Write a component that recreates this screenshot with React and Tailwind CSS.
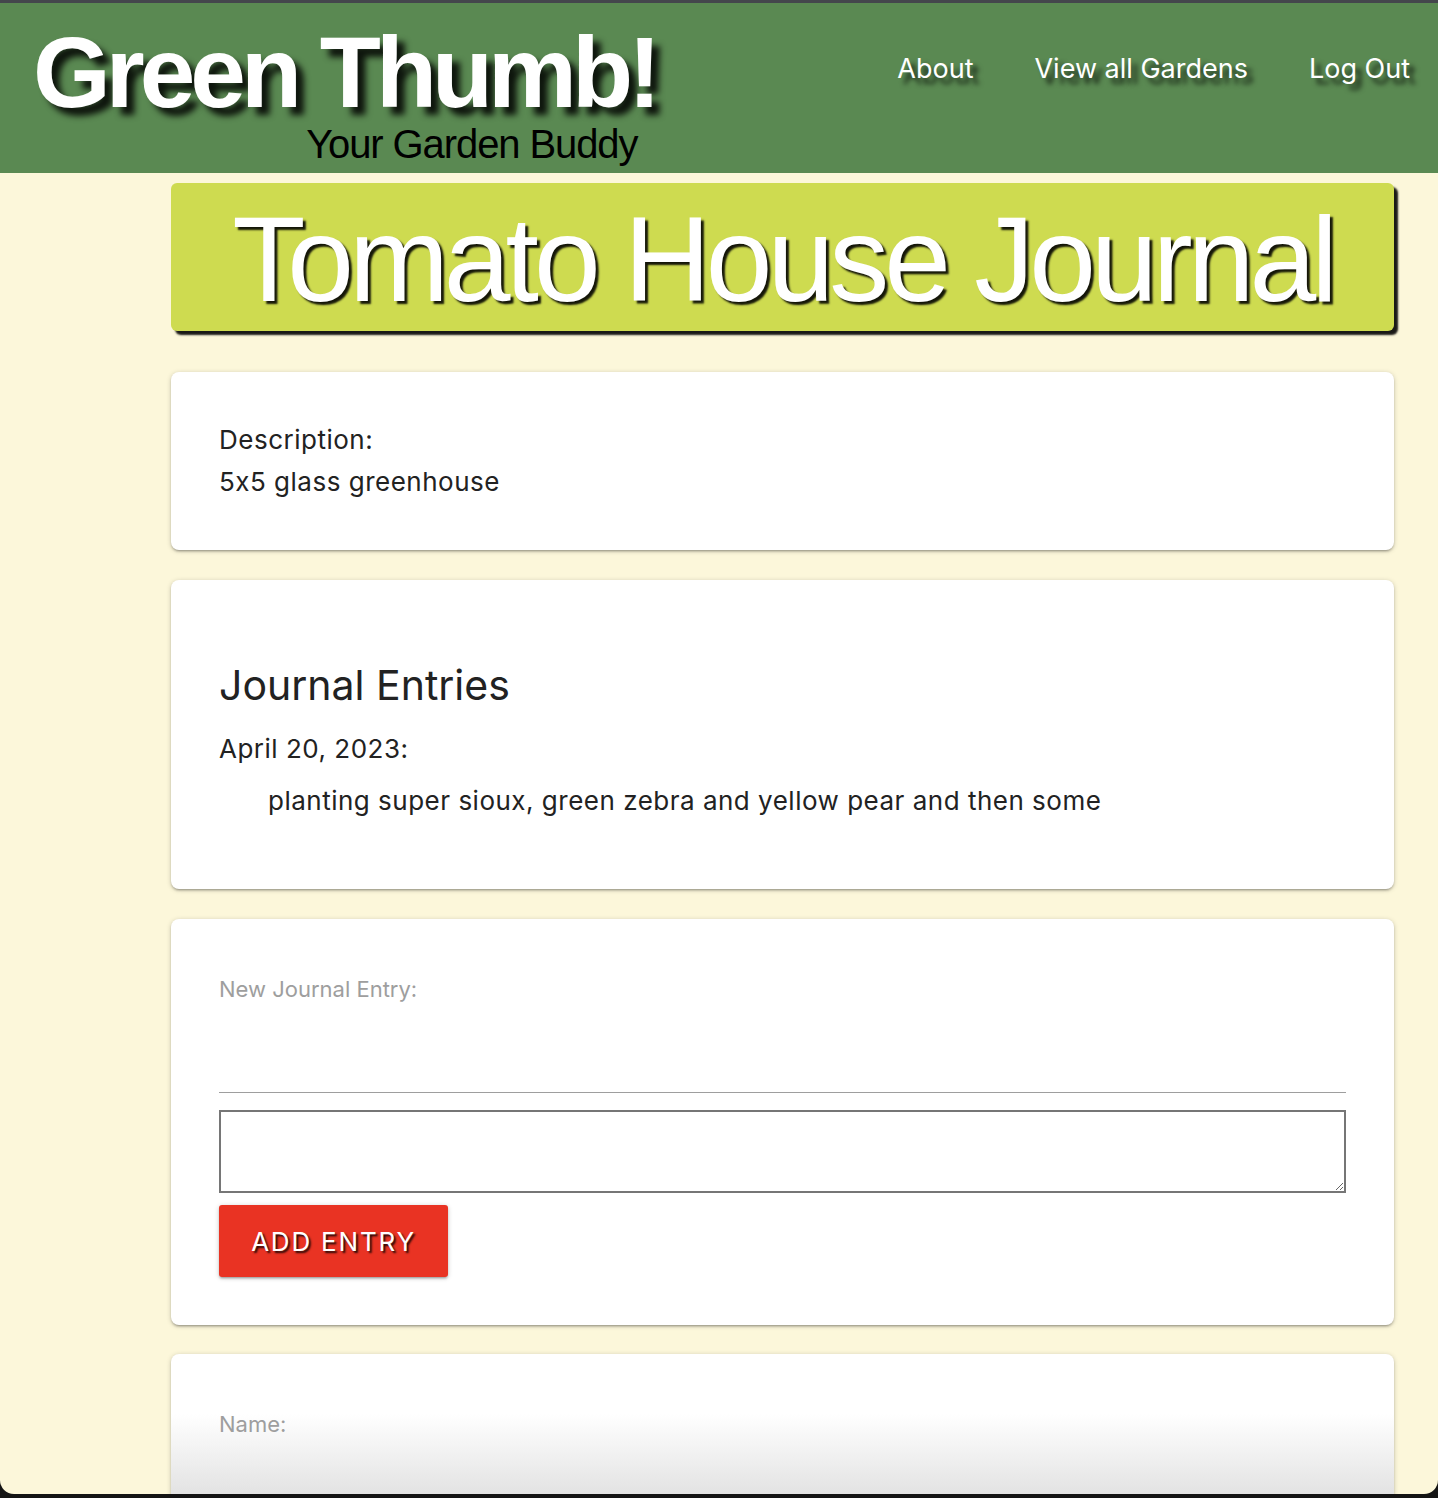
export default function App() {
  const sans = { fontFamily: '"Liberation Sans", Arial, sans-serif' };
  const ui = { fontFamily: 'Inter, "Noto Sans", sans-serif' };
  const card = "bg-white rounded-[8px] shadow-[0_2px_2px_0_rgba(0,0,0,0.14),0_3px_1px_-2px_rgba(0,0,0,0.12),0_1px_5px_0_rgba(0,0,0,0.2)] [font-feature-settings:'calt'_0]";
  return (
    <div className="h-[1498px] bg-[#141414] flex flex-col overflow-hidden">
      <div className="h-[3px] bg-[#44464c] shrink-0" />
      <div className="h-[1491px] bg-[#fcf7da] rounded-b-[14px] overflow-hidden flex flex-col shrink-0">
        <header className="h-[170px] bg-[#5a8952] flex justify-between shrink-0">
          <div className="flex flex-col pl-[33px] pt-[25px]">
            <div
              style={sans}
              className="text-white font-bold text-[100px] leading-[88px] tracking-[-5px] [text-shadow:8px_8px_6px_rgba(0,0,0,0.85)]"
            >
              Green Thumb!
            </div>
            <div
              style={sans}
              className="self-end mr-[19px] mt-[8px] text-black text-[40px] leading-[40px] tracking-[-1.1px]"
            >
              Your Garden Buddy
            </div>
          </div>
          <nav
            style={ui}
            className="flex items-start gap-[61px] pr-[28px] pt-[48px] text-white text-[27px] leading-[36px] [text-shadow:6px_6px_5px_rgba(0,0,0,0.75)]"
          >
            <a>About</a>
            <a>View all Gardens</a>
            <a>Log Out</a>
          </nav>
        </header>

        <main className="flex flex-col pl-[171px] pr-[44px]">
          <div className="mt-[10px] h-[148px] bg-[#cedb50] rounded-[6px] shadow-[4px_4px_2px_rgba(0,0,0,0.9)] flex justify-center pt-[16px]">
            <h1
              style={sans}
              className="text-white text-[120px] leading-[120px] tracking-[-5px] [text-shadow:3px_3px_2px_rgba(0,0,0,0.9)]"
            >
              Tomato House Journal
            </h1>
          </div>

          <section className={`${card} mt-[41px] px-[48px] py-[47px] text-[#222] text-[26px] leading-[42px] tracking-[0.5px]`} style={ui}>
            <p>Description:</p>
            <p>5x5 glass greenhouse</p>
          </section>

          <section className={`${card} mt-[30px] px-[48px] pt-[78px] pb-[67px] text-[#222]`} style={ui}>
            <h2 className="text-[41px] leading-[54px]">Journal Entries</h2>
            <p className="mt-[16px] text-[26px] leading-[42px] tracking-[0.5px]">April 20, 2023:</p>
            <p className="mt-[10px] pl-[49px] text-[26px] leading-[42px] tracking-[0.5px]">
              planting super sioux, green zebra and yellow pear and then some
            </p>
          </section>

          <section className={`${card} mt-[30px] px-[48px] pt-[56px] pb-[48px] flex flex-col`} style={ui}>
            <label className="text-[#9e9e9e] text-[22px] leading-[28px]">New Journal Entry:</label>
            <div className="h-[90px] border-b border-[#9e9e9e]" />
            <textarea className="mt-[17px] h-[83px] border-2 border-[#767676] bg-white" />
            <button
              className="mt-[12px] self-start w-[229px] h-[72px] rounded-[3px] bg-[#e93323] text-white text-[26px] tracking-[1.8px] [text-shadow:2px_2px_2px_rgba(0,0,0,0.85)] shadow-[0_2px_2px_0_rgba(0,0,0,0.14),0_3px_1px_-2px_rgba(0,0,0,0.12),0_1px_5px_0_rgba(0,0,0,0.2)]"
            >
              ADD ENTRY
            </button>
          </section>

          <section className={`${card} mt-[29px] h-[400px] px-[48px] pt-[56px] bg-gradient-to-b from-white from-[15%] to-[#dcdcdc] to-[40%]`} style={ui}>
            <label className="text-[#9e9e9e] text-[22px] leading-[28px]">Name:</label>
          </section>
        </main>
      </div>
    </div>
  );
}
